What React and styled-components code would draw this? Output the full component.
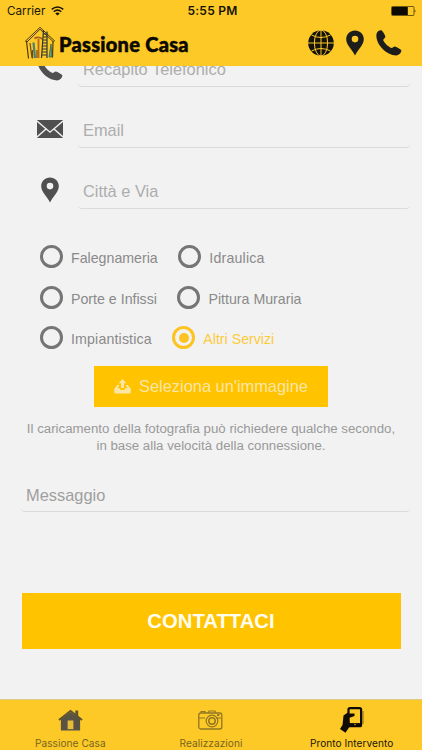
import React from "react";
import styled, { createGlobalStyle } from "styled-components";

const Global = createGlobalStyle`
  * { box-sizing: border-box; }
  body { margin: 0; background: #f2f2f2; }
  button { font: inherit; border: 0; margin: 0; padding: 0; background: none; }
`;

const Screen = styled.div`
  width: 422px;
  height: 750px;
  display: flex;
  flex-direction: column;
  overflow: hidden;
  background: #f2f2f2;
  font-family: "Liberation Sans", Arial, sans-serif;
  white-space: nowrap;
`;

const Header = styled.header`
  flex: none;
  height: 66px;
  background: #fdc927;
`;

const StatusBar = styled.div`
  height: 22px;
  padding: 0 7px;
  display: grid;
  grid-template-columns: 1fr auto 1fr;
  align-items: center;
  font: 400 11.7px/22px Inter, sans-serif;
  color: #1c1805;
`;

const Carrier = styled.div`
  display: flex;
  align-items: center;
  gap: 6px;
`;

const Clock = styled.div`
  font-weight: 600;
  font-size: 12px;
  letter-spacing: 0.25px;
  color: #151204;
  padding-left: 3px;
`;

const BatterySlot = styled.div`
  display: flex;
  justify-content: flex-end;
  margin-right: -3px;
`;

const TitleBar = styled.div`
  height: 44px;
  display: flex;
  align-items: center;
  padding: 0 20px 2px 24px;
`;

const BrandName = styled.div`
  flex: 1;
  margin-left: 3px;
  padding-top: 1px;
  font: 900 20px/24px Lato, sans-serif;
  letter-spacing: 0.28px;
  color: #0c0903;
  -webkit-text-stroke: 0.5px #0c0903;
`;

const Actions = styled.div`
  display: flex;
  align-items: center;
  gap: 12px;
  color: #1d1d1b;
`;

const Content = styled.main`
  flex: 1;
  min-height: 0;
  overflow: hidden;
  display: flex;
  flex-direction: column;
`;

const Fields = styled.div`
  flex: none;
  margin-top: -28px;
`;

const FieldRow = styled.div`
  height: 61px;
  display: flex;
  align-items: center;
  padding: 0 12px 0 37px;
`;

const FieldIcon = styled.div`
  width: 26px;
  height: 61px;
  margin-right: 15px;
  padding-bottom: 1px;
  display: flex;
  justify-content: center;
  align-items: center;
  color: #505050;
`;

const Placeholder = styled.div`
  flex: ${(p) => (p.$wide ? "none" : 1)};
  height: ${(p) => (p.$wide ? 34 : 36)}px;
  padding: 0 5px;
  border-bottom: 1.5px solid #dadada;
  border-radius: 4px;
  font-size: 16.4px;
  line-height: ${(p) => (p.$wide ? 35 : 37)}px;
  color: ${(p) => (p.$wide ? "#9f9f9f" : "#adadad")};
`;

const Options = styled.div`
  flex: none;
  padding: 15px 0 0 40px;
`;

const OptionRow = styled.div`
  height: 40.7px;
  display: flex;
  align-items: center;
  gap: 20.5px;
`;

const Option = styled.div`
  display: flex;
  align-items: center;
  gap: 8px;
  font-size: 14.2px;
  letter-spacing: ${(p) => p.$tracking || 0}px;
  color: ${(p) => (p.$on ? "#fccb3a" : "#8a8a8a")};
`;

const Radio = styled.span`
  width: 23px;
  height: 23px;
  border-radius: 50%;
  border: 3.2px solid ${(p) => (p.$on ? "#fcc322" : "#757575")};
  display: grid;
  place-items: center;
  &::after {
    content: "";
    width: 10px;
    height: 10px;
    border-radius: 50%;
    background: ${(p) => (p.$on ? "#fcc322" : "transparent")};
  }
`;

const OptionLabel = styled.span`
  padding-top: 3px;
`;

const UploadButton = styled.button`
  flex: none;
  width: 234px;
  height: 41px;
  margin: 8px 0 0 94px;
  display: flex;
  align-items: center;
  justify-content: center;
  gap: 8px;
  background: #ffc300;
  color: #fbe6a6;
  font-size: 16.4px;
`;

const Note = styled.p`
  flex: none;
  margin: 14px 0 0;
  text-align: center;
  font-size: 13.25px;
  line-height: 16.5px;
  color: #999;
`;

const Message = styled.div`
  flex: none;
  padding: 24px 12px 0 21px;
`;

const SubmitButton = styled.button`
  flex: none;
  width: 379px;
  height: 56px;
  margin: 81px 0 0 22px;
  padding-right: 1px;
  background: #ffc300;
  color: #fffdf0;
  font-weight: 700;
  font-size: 20.3px;
`;

const TabBar = styled.nav`
  flex: none;
  height: 51px;
  display: grid;
  grid-template-columns: repeat(3, 1fr);
  background: #fdc927;
  border-top: 1px solid #dcc98c;
`;

const Tab = styled.div`
  display: flex;
  flex-direction: column;
  align-items: center;
  font: 400 10.1px/13px Inter, sans-serif;
  letter-spacing: 0.05px;
  color: ${(p) => (p.$active ? "#1b1606" : "#7a651f")};
`;

const TabIcon = styled.div`
  height: 37px;
  display: flex;
  align-items: center;
  padding-top: 3px;
`;

const Phone = () => (
  <svg width="26" height="26" viewBox="0 0 26 26" fill="currentColor">
    <path d="M.5 4C1 1.5 3 .1 5.5.3 7 1.5 8.6 4.5 9.4 6.5 9.2 8.5 7.2 8.6 7.2 10.2 8.5 13 12 16.5 15.5 18 17 18 17.5 16.3 19 16.4 21.5 17.2 24 18.8 25.4 20.3 25.3 23 23 25 20.5 25.4 9.5 25.5-1 13 .5 4Z" />
  </svg>
);

const Pin = () => (
  <svg width="18" height="26" viewBox="0 0 18 26" fill="currentColor">
    <path fillRule="evenodd" d="M9 .4C4 .4.2 4.200.2 9c0 3 1.400 5.500 3.300 8.300C5.500 20 7.500 22.500 9 25.500c1.500-3 3.500-5.500 5.500-8.200C16.400 14.500 17.800 12 17.800 9 17.800 4.200 14 .4 9 .4Zm0 5.400a3.300 3.300 0 1 1 0 6.600 3.300 3.300 0 0 1 0-6.600Z" />
  </svg>
);

const Globe = () => (
  <svg width="26" height="26" viewBox="0 0 26 26">
    <circle cx="13" cy="13" r="12.8" fill="#14120a" />
    <g fill="none" stroke="#fdc927" strokeWidth="1">
      <path d="M13 0V26M0 13H26M3.500 5Q13 10 22.500 5M3.500 21Q13 16 22.500 21" />
      <ellipse cx="13" cy="13" rx="6.600" ry="13" />
    </g>
  </svg>
);

const Mail = () => (
  <svg width="26" height="18" viewBox="0 0 26 18">
    <rect width="26" height="18" rx=".8" fill="currentColor" />
    <path d="M0 1 13 12.200 26 1M0 17 9.300 8.700M26 17 16.700 8.700" fill="none" stroke="#f2f2f2" strokeWidth="1.400" />
  </svg>
);

const Upload = () => (
  <svg width="17" height="15" viewBox="0 0 17 15" fill="currentColor">
    <path d="M8.500 0 12.300 4.300H10V9H7V4.300H4.700Z" />
    <path d="M3.300 6H5.400L3.600 9.300H5.700L6.700 11h3.600l1-1.700h2.100L11.600 6h2.100L16.800 10v3q0 1.500-1.500 1.500H1.700Q.2 14.500.2 13V10Z" />
  </svg>
);

const Wifi = () => (
  <svg width="13" height="10" viewBox="0 0 13 10">
    <path d="M.7 3.400Q6.500-1.500 12.300 3.400M2.700 5.700Q6.500 2.500 10.300 5.700" fill="none" stroke="#171305" strokeWidth="1.500" />
    <path d="M4.300 7.400Q6.500 5.700 8.700 7.400L6.500 9.600Z" fill="#171305" />
  </svg>
);

const Battery = () => (
  <svg width="27" height="10" viewBox="0 0 27 10">
    <rect x=".5" y=".5" width="22.500" height="9" rx="1" fill="none" stroke="#493b0c" strokeWidth=".8" />
    <rect x="1" y="1" width="15.800" height="8" fill="#0b0901" />
    <path d="M23.700 3.500Q25.500 5 23.700 6.500Z" fill="#2d2508" />
  </svg>
);

const Logo = () => (
  <svg width="32" height="34" viewBox="0 0 32 34" fill="none">
    <path d="M1 15.500 16 1.300 31 15.300M2.500 16.500 16 3.200 29.500 16" stroke="#382b0b" strokeWidth=".9" />
    <path d="M2.500 15 4.500 32.500M29 15 28.500 31.500" stroke="#4a3810" strokeWidth="1.200" />
    <path d="M6 17 8 32M8.500 24V32.500M13 24V32" stroke="#6e4b12" strokeWidth="1.200" />
    <path d="M9.500 16.500 11 32" stroke="#498177" strokeWidth="2.200" />
    <path d="M14.500 13V32" stroke="#b96720" strokeWidth="1.800" />
    <path d="M10.500 12.500Q14 10 18.500 13" stroke="#a65b20" strokeWidth="1.800" />
    <path d="M19.500 4 17.500 32M23 5.500 23 32M19.500 8H23M19.300 11H23M19 14H23M18.800 17H23M18.600 20H23M18.400 23H23M18.200 26H23M18 29H23" stroke="#30382f" strokeWidth="1.200" />
    <path d="M27 18 25 31H28Z" fill="#5fa27d" stroke="#37645a" strokeWidth=".8" />
  </svg>
);

const House = () => (
  <svg width="25" height="23" viewBox="0 0 26 23">
    <path d="M18 7V1H21V10" fill="#5e552f" />
    <path d="M3 10 13 3 23 10V22H3Z" fill="#595344" />
    <path d="M1 11 13 1.500 25 11" fill="none" stroke="#5d532f" strokeWidth="2" />
    <rect x="10" y="11.500" width="6" height="9" fill="#e7bd38" />
  </svg>
);

const Camera = () => (
  <svg width="25" height="20" viewBox="0 0 25 20" fill="none" stroke="#907723">
    <rect x=".8" y="3" width="23" height="16" rx="2" strokeWidth="1.300" />
    <path d="M3 3V1.500H7V3M10 3 11 1H17L18 3M1 8H7M18 8H23" strokeWidth="1.100" />
    <circle cx="14" cy="11" r="5.800" strokeWidth="1.200" />
    <circle cx="14" cy="11" r="3.200" strokeWidth="1.500" />
    <path d="M19 5H21.500" strokeWidth="1.800" />
  </svg>
);

const HandPhone = () => (
  <svg width="24" height="26" viewBox="0 0 24 26">
    <rect x="8.500" y="1.200" width="12.600" height="18" rx="1.500" fill="none" stroke="#0d0a03" strokeWidth="2.200" />
    <path d="M9 17.500H21" stroke="#0d0a03" strokeWidth="2.800" />
    <path d="M23 4V17" stroke="#6a540f" strokeWidth=".8" />
    <path d="M8.500 5 3.500 8.500 2.500 18 0 22 5.500 25.700 9 20.500 12 18 9.500 15.500 9 11 14.500 9V6.500L9 6.500Z" fill="#100c03" />
    <circle cx="15" cy="17.500" r=".7" fill="#fdc927" />
  </svg>
);

const fields = [
  { label: "Recapito Telefonico", icon: <Phone /> },
  { label: "Email", icon: <Mail /> },
  { label: "Città e Via", icon: <Pin /> },
];

const services = [
  [{ name: "Falegnameria" }, { name: "Idraulica", tracking: 0.2 }],
  [{ name: "Porte e Infissi" }, { name: "Pittura Muraria" }],
  [{ name: "Impiantistica", tracking: 0.15 }, { name: "Altri Servizi" }],
];

export default function App() {
  const selected = "Altri Servizi";
  return (
    <Screen>
      <Global />
      <Header>
        <StatusBar>
          <Carrier>Carrier <Wifi /></Carrier>
          <Clock>5:55 PM</Clock>
          <BatterySlot><Battery /></BatterySlot>
        </StatusBar>
        <TitleBar>
          <Logo />
          <BrandName>Passione Casa</BrandName>
          <Actions><Globe /><Pin /><Phone /></Actions>
        </TitleBar>
      </Header>
      <Content>
        <Fields>
          {fields.map((f) => (
            <FieldRow key={f.label}>
              <FieldIcon>{f.icon}</FieldIcon>
              <Placeholder>{f.label}</Placeholder>
            </FieldRow>
          ))}
        </Fields>
        <Options>
          {services.map((row) => (
            <OptionRow key={row[0].name}>
              {row.map(({ name, tracking }) => (
                <Option key={name} $on={name === selected} $tracking={tracking}>
                  <Radio $on={name === selected} />
                  <OptionLabel>{name}</OptionLabel>
                </Option>
              ))}
            </OptionRow>
          ))}
        </Options>
        <UploadButton><Upload />Seleziona un'immagine</UploadButton>
        <Note>
          Il caricamento della fotografia può richiedere qualche secondo,<br />
          in base alla velocità della connessione.
        </Note>
        <Message><Placeholder $wide>Messaggio</Placeholder></Message>
        <SubmitButton>CONTATTACI</SubmitButton>
      </Content>
      <TabBar>
        <Tab><TabIcon><House /></TabIcon>Passione Casa</Tab>
        <Tab><TabIcon><Camera /></TabIcon>Realizzazioni</Tab>
        <Tab $active><TabIcon><HandPhone /></TabIcon>Pronto Intervento</Tab>
      </TabBar>
    </Screen>
  );
}
